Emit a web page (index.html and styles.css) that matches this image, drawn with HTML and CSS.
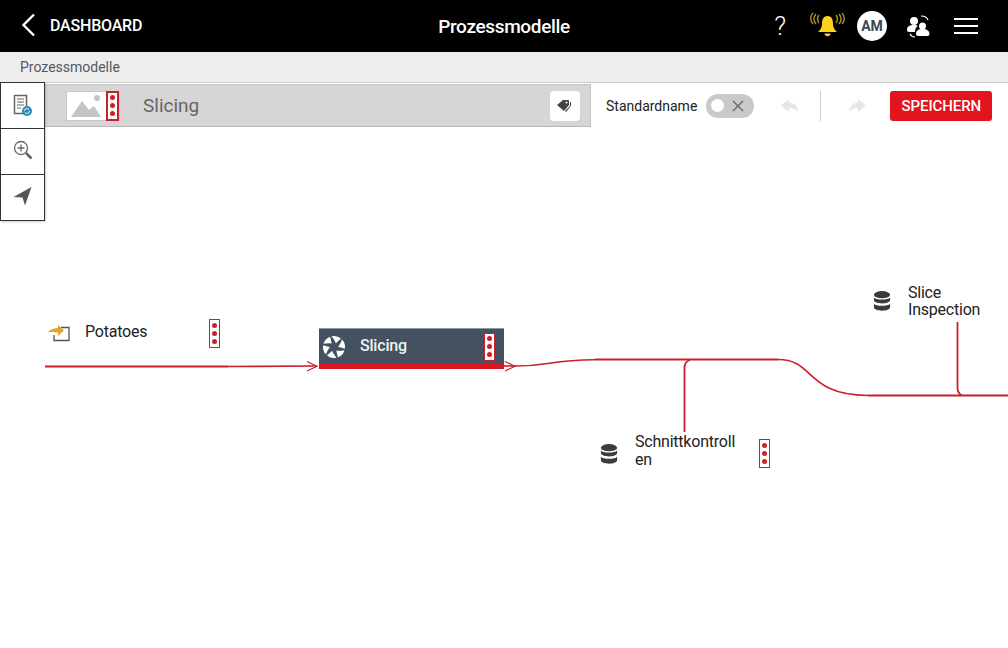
FILE: index.html
```html
<!DOCTYPE html>
<html lang="de">
<head>
    <meta charset="UTF-8">
    <title>Prozessmodelle</title>
    <link rel="stylesheet" href="styles.css">
</head>
<body>
<header class="topbar">
    <a class="back">
        <svg class="back-icon" width="16" height="24" viewBox="0 0 16 24"><path d="M14 1.500 3.500 12 14 22.500" fill="none" stroke="#fff" stroke-width="2.400"/></svg>
        DASHBOARD
    </a>
    <h1 class="page-title">Prozessmodelle</h1>
    <div class="top-actions">
        <span class="help">?</span>
        <svg class="bell" width="36" height="26" viewBox="0 0 36 26">
            <path d="M18.500 4C14 4 13 8 13 12c0 4-2 6-4 8h19c-2-2-4-4-4-8 0-4-1-8-5.500-8z" fill="#ffd21f"/>
            <path d="M15.500 21.500h6c0 3.500-6 3.500-6 0z" fill="#ffd21f"/>
            <path d="M10 3c-2 2.500-2 5 0 8M7 2c-2.500 3-2.500 7 0 10M4 1C1 4 1 9 4 12M27 3c2 2.500 2 5 0 8M30 2c2.500 3 2.500 7 0 10M33 1c3 3 3 8 0 11" fill="none" stroke="#a08a30" stroke-width="1.500"/>
        </svg>
        <span class="avatar">AM</span>
        <svg class="users" width="24" height="24" viewBox="0 0 24 24" fill="#fff">
            <circle cx="7" cy="7" r="4"/>
            <path d="M0 16c0-4 3-5 7-5 2 0 3 .5 4 1-2 1-3 3-3 6H2c-1 0-2-1-2-2z"/>
            <circle cx="15.500" cy="12" r="3.500"/>
            <path d="M9 20c0-3 2-5 6.500-5s7 2 7 5c0 1-1 2-2 2H11c-1 0-2-1-2-2z"/>
            <path d="M14 2c3 0 6 1 7 4M3 20c1 2 3 3 5 3" fill="none" stroke="#fff" stroke-width="1.200"/>
        </svg>
        <span class="menu"><i></i><i></i><i></i></span>
    </div>
</header>

<div class="crumbs">Prozessmodelle</div>

<div class="toolbar">
    <div class="name-bar">
        <div class="thumb">
            <svg width="38" height="28" viewBox="0 0 38 28">
                <rect width="38" height="28" fill="#fff"/>
                <path d="M4 25 15 9l7 9 5-4 7 11z" fill="#c4c4c4"/>
                <circle cx="30" cy="6" r="3" fill="#c4c4c4"/>
            </svg>
            <span class="dots dots-thick"><i></i><i></i><i></i></span>
        </div>
        <span class="name-text">Slicing</span>
        <button class="tag-btn">
            <svg width="18" height="14" viewBox="0 0 18 14" fill="#444">
                <path d="M1 6 7 1h5c1 0 1 1 1 1v4l-5 6z"/>
                <path d="M15 3v4l-5 6-1-1 5-5V3z"/>
                <circle cx="10.500" cy="3.500" r="1" fill="#fff"/>
            </svg>
        </button>
    </div>
    <div class="save-bar">
        <span class="toggle-label">Standardname</span>
        <span class="toggle">
            <i class="knob"></i>
            <svg width="12" height="12" viewBox="0 0 12 12"><path d="M1 1l10 10M11 1 1 11" stroke="#666" stroke-width="1.400"/></svg>
        </span>
        <svg class="undo" width="18" height="14" viewBox="0 0 18 14"><path d="M8 0 0 6.500 8 13V9c4 0 7 1 9 4 0-5-3-9-9-9.500z" fill="#e6e6e6"/></svg>
        <span class="divider"></span>
        <svg class="redo" width="18" height="14" viewBox="0 0 18 14"><path d="M10 0l8 6.500L10 13V9c-4 0-7 1-9 4 0-5 3-9 9-9.500z" fill="#e6e6e6"/></svg>
        <button class="save-btn">SPEICHERN</button>
    </div>
</div>

<div class="side-tools">
    <div class="tool tool-doc">
        <svg width="20" height="24" viewBox="0 0 20 24">
            <path d="M1.500 1.500h12v18h-12z" fill="#fff" stroke="#666" stroke-width="1.500"/>
            <path d="M4 5h7M4 8h7M4 11h7M4 14h4" stroke="#666" stroke-width="1.200"/>
            <circle cx="14" cy="17" r="5" fill="#2a8ab8"/>
            <path d="M11.500 17a2.500 2.500 0 0 1 4.500-1.500M16.500 17a2.500 2.500 0 0 1-4.500 1.500" fill="none" stroke="#fff" stroke-width="1"/>
        </svg>
    </div>
    <div class="tool">
        <svg width="20" height="20" viewBox="0 0 20 20">
            <circle cx="8" cy="8" r="6.500" fill="none" stroke="#666" stroke-width="1.300"/>
            <path d="M8 4.500v7M4.500 8h7" stroke="#666" stroke-width="1.300"/>
            <path d="M13 13l5.500 5.500" stroke="#666" stroke-width="2.600"/>
        </svg>
    </div>
    <div class="tool">
        <svg width="20" height="20" viewBox="0 0 20 20"><path d="M18.500 1 .5 11l9 .5 2.500 8z" fill="#555"/></svg>
    </div>
</div>

<main class="canvas">
    <svg class="flow" width="1008" height="521" viewBox="0 127 1008 521" fill="none" stroke="#c9202c" stroke-width="1.600">
        <path d="M45 366.500H228" stroke-width="2"/>
        <path d="M228 366.500 317 366"/>
        <path d="M307 361.500 317 366.200 307 371" stroke-width="1.200"/>
        <path d="M504 366H516"/>
        <path d="M505 361.500 515 366.200 505 371" stroke-width="1.200"/>
        <path d="M516 366C550 366 550 360 595 359.800"/>
        <path d="M595 359.500H778" stroke-width="2.200"/>
        <path d="M778 359.500C815 359.500 805 395 868 395.500"/>
        <path d="M868 395.500H1008" stroke-width="2.200"/>
        <path d="M684.500 432V368C684.500 363 686 361 690 360" stroke-width="1.800"/>
        <path d="M957.500 322V388C957.500 392 959 394 962 395.500" stroke-width="1.800"/>
    </svg>

    <div class="node node-input">
        <svg width="22" height="18" viewBox="0 0 22 18">
            <path d="M13 2.500h8v13H6V10" fill="none" stroke="#555" stroke-width="1.300"/>
            <path d="M0 7c3-3 6-4 10-4V0l6 5.500L10 11V7.500C6 7 3 7 0 7z" fill="#e8a030"/>
        </svg>
        <span class="node-label">Potatoes</span>
        <span class="dots"><i></i><i></i><i></i></span>
    </div>

    <div class="step">
        <svg width="24" height="24" viewBox="0 0 24 24" fill="#fff">
            <path d="M9.500 1.300A11 11 0 0 1 19 3.500L13.800 8.300C13 6 11.500 3.500 9.500 1.300z"/>
            <path d="M9.500 1.300A11 11 0 0 1 19 3.500L13.800 8.300C13 6 11.500 3.500 9.500 1.300z" transform="rotate(60 12 12)"/>
            <path d="M9.500 1.300A11 11 0 0 1 19 3.500L13.800 8.300C13 6 11.500 3.500 9.500 1.300z" transform="rotate(120 12 12)"/>
            <path d="M9.500 1.300A11 11 0 0 1 19 3.500L13.800 8.300C13 6 11.500 3.500 9.500 1.300z" transform="rotate(180 12 12)"/>
            <path d="M9.500 1.300A11 11 0 0 1 19 3.500L13.800 8.300C13 6 11.500 3.500 9.500 1.300z" transform="rotate(240 12 12)"/>
            <path d="M9.500 1.300A11 11 0 0 1 19 3.500L13.800 8.300C13 6 11.500 3.500 9.500 1.300z" transform="rotate(300 12 12)"/>
        </svg>
        <span class="step-label">Slicing</span>
        <span class="dots dots-white"><i></i><i></i><i></i></span>
    </div>

    <div class="node node-control">
        <svg class="db" width="18" height="22" viewBox="0 0 20 24" fill="#3c3c3c">
            <ellipse cx="10" cy="5" rx="9" ry="4"/>
            <path d="M1 8c2 3 16 3 18 0v3c0 5-18 5-18 0zM1 15c2 3 16 3 18 0v4c0 5-18 5-18 0z"/>
        </svg>
        <span class="node-label node-wrap">Schnittkontroll<br>en</span>
        <span class="dots"><i></i><i></i><i></i></span>
    </div>

    <div class="node node-inspect">
        <svg class="db" width="18" height="22" viewBox="0 0 20 24" fill="#3c3c3c">
            <ellipse cx="10" cy="5" rx="9" ry="4"/>
            <path d="M1 8c2 3 16 3 18 0v3c0 5-18 5-18 0zM1 15c2 3 16 3 18 0v4c0 5-18 5-18 0z"/>
        </svg>
        <span class="node-label node-wrap">Slice<br>Inspection</span>
    </div>
</main>
</body>
</html>
```

FILE: styles.css
```css
* {
    box-sizing: border-box;
}
body {
    margin: 0;
    font-family: Roboto, "Liberation Sans", sans-serif;
    background-color: #fff;
    color: #222;
    overflow: hidden;
}
.topbar {
    height: 52px;
    background-color: #000;
    color: #fff;
    display: flex;
    align-items: center;
    justify-content: center;
    position: relative;
}
.back {
    position: absolute;
    left: 20px;
    top: 13px;
    display: flex;
    align-items: center;
    gap: 14px;
    font-size: 16px;
    font-weight: 500;
    letter-spacing: -0.2px;
}
.page-title {
    margin: 0;
    font-size: 19px;
    font-weight: 500;
    letter-spacing: -0.35px;
}
.top-actions {
    position: absolute;
    right: 30px;
    top: 0;
    height: 52px;
    display: flex;
    align-items: center;
}
.help {
    font-size: 26px;
    font-weight: 300;
    margin-right: 23px;
}
.bell {
    margin-right: 12px;
    margin-top: -3px;
}
.avatar {
    width: 30px;
    height: 30px;
    border-radius: 50%;
    background-color: #fff;
    color: #3a4656;
    font-size: 14px;
    font-weight: 700;
    display: flex;
    align-items: center;
    justify-content: center;
    margin-right: 20px;
}
.users {
    margin-right: 23px;
}
.menu {
    width: 24px;
    display: flex;
    flex-direction: column;
    gap: 5px;
}
.menu i {
    height: 2px;
    background-color: #fff;
}
.crumbs {
    height: 31px;
    background-color: #efecec;
    border-bottom: 1px solid #ccc;
    padding: 7px 20px 0;
    font-size: 14px;
    color: #4f5a66;
}
.toolbar {
    height: 43px;
    display: flex;
    margin-top: 1px;
}
.name-bar {
    width: 591px;
    background-color: #d7d5d8;
    border-top: 1px solid #c4c4c4;
    border-bottom: 1px solid #b8b8b8;
    border-right: 1px solid #c4c4c4;
    padding-left: 66px;
    padding-right: 10px;
    display: flex;
    align-items: center;
}
.thumb {
    display: flex;
    border: 1px solid #c8c8c8;
    background-color: #fff;
    height: 30px;
    width: 54px;
    align-items: stretch;
}
.name-text {
    margin-left: 23px;
    font-size: 19px;
    color: #666;
    flex: 1;
}
.tag-btn {
    width: 30px;
    height: 30px;
    padding: 0;
    border: 0;
    border-radius: 4px;
    background-color: #fff;
    display: flex;
    align-items: center;
    justify-content: center;
}
.save-bar {
    flex: 1;
    display: flex;
    align-items: center;
    padding-left: 15px;
}
.toggle-label {
    font-size: 14px;
    color: #222;
    margin-right: 9px;
}
.toggle {
    width: 48px;
    height: 24px;
    border-radius: 12px;
    background-color: #c9c9c9;
    display: flex;
    align-items: center;
    justify-content: space-between;
    padding: 0 10px 0 5px;
}
.knob {
    width: 13px;
    height: 13px;
    border-radius: 50%;
    background-color: #fff;
}
.undo {
    margin-left: 27px;
}
.divider {
    width: 1px;
    height: 30px;
    background-color: #ccc;
    margin-left: 21px;
}
.redo {
    margin-left: 27px;
}
.save-btn {
    margin-left: 24px;
    width: 102px;
    height: 30px;
    padding: 0;
    border: 0;
    border-radius: 3px;
    background-color: #e2141f;
    color: #fff;
    font-family: inherit;
    font-size: 15px;
    font-weight: 500;
    letter-spacing: -0.1px;
}
.side-tools {
    position: absolute;
    left: 0;
    top: 82px;
    width: 45px;
    background-color: #fff;
    border: 1px solid #333;
    box-shadow: 1px 1px 2px rgba(0, 0, 0, 0.2);
}
.tool {
    height: 46px;
    display: flex;
    align-items: center;
    justify-content: center;
    border-bottom: 1px solid #333;
    padding-bottom: 3px;
}
.tool-doc {
    padding-bottom: 0;
}
.tool:last-child {
    height: 45px;
    border-bottom: 0;
}
.canvas {
    position: relative;
    height: 521px;
}
.flow {
    position: absolute;
    left: 0;
    top: 0;
}
/* red "more" box, 3 dots */
.dots {
    width: 11px;
    height: 29px;
    border: 1px solid #c9202c;
    background-color: #fff;
    display: flex;
    flex-direction: column;
    align-items: center;
    justify-content: space-evenly;
    flex-shrink: 0;
}
.dots i {
    width: 5px;
    height: 5px;
    border-radius: 50%;
    background-color: #c9202c;
}
.dots-thick {
    width: 13px;
    border: 2px solid #c9202c;
    margin-left: auto;
    height: 30px;
    margin-top: -1px;
}
.dots-white {
    border-color: #c9202c;
    height: 28px;
}
.node {
    position: absolute;
    display: flex;
    align-items: center;
}
.node-label {
    font-size: 16px;
    color: #222;
    letter-spacing: -0.22px;
}
.node-wrap {
    line-height: 17px;
}
.node-input {
    left: 48px;
    top: 192px;
    height: 29px;
}
.node-input .node-label {
    margin-left: 15px;
    width: 124px;
    margin-top: -5px;
}
.node-control {
    left: 600px;
    top: 312px;
    height: 29px;
}
.node-control .node-label {
    margin-left: 17px;
    width: 124px;
    margin-top: -6px;
    line-height: 18px;
}
.node-inspect {
    left: 873px;
    top: 157px;
    height: 34px;
}
.node-inspect .node-label {
    margin-left: 17px;
}
.step {
    position: absolute;
    left: 319px;
    top: 201px;
    width: 185px;
    height: 41px;
    background-color: #445160;
    border-top: 1px solid #8d99a3;
    border-bottom: 5px solid #d9161f;
    display: flex;
    align-items: center;
    padding: 0 9px 0 3px;
}
.step-label {
    margin-left: 14px;
    margin-top: -2px;
    font-size: 16px;
    font-weight: 500;
    letter-spacing: -0.2px;
    color: #eef0f2;
    flex: 1;
}
```
